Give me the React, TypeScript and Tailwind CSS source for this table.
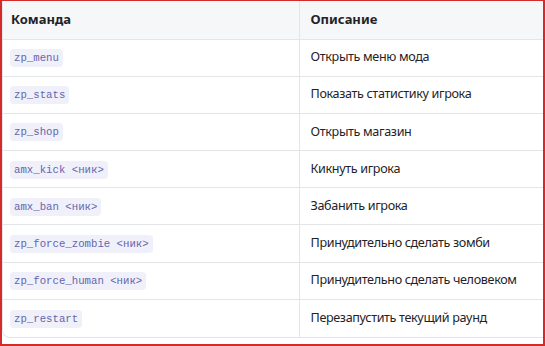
const rows: [string, string][] = [
  ['zp_menu', 'Открыть меню мода'],
  ['zp_stats', 'Показать статистику игрока'],
  ['zp_shop', 'Открыть магазин'],
  ['amx_kick <ник>', 'Кикнуть игрока'],
  ['amx_ban <ник>', 'Забанить игрока'],
  ['zp_force_zombie <ник>', 'Принудительно сделать зомби'],
  ['zp_force_human <ник>', 'Принудительно сделать человеком'],
  ['zp_restart', 'Перезапустить текущий раунд'],
]

export default function App() {
  return (
    <div className="w-[545px] h-[346px] bg-white border-t border-l-2 border-r-2 border-b-2 border-[#d42a2a] font-['Noto_Sans',sans-serif] text-[12.6px] tracking-[-0.35px] text-[#1f2328] overflow-hidden">
      <div className="border-b border-l border-[#e3e5e8] rounded-bl-lg overflow-hidden">
        <table className="w-full border-collapse">
          <thead>
            <tr className="h-[38px] bg-[#f6f7f9] text-left">
              <th className="w-[296px] pl-2 font-bold text-[13px] tracking-normal border-r border-[#e3e5e8] border-b">
                Команда
              </th>
              <th className="pl-[11px] font-bold text-[13px] tracking-normal border-b border-[#e3e5e8]">
                Описание
              </th>
            </tr>
          </thead>
          <tbody>
            {rows.map(([cmd, desc], i) => (
              <tr
                key={cmd}
                className={`h-[37.2px] ${i < rows.length - 1 ? 'border-b border-[#e3e5e8]' : ''}`}
              >
                <td className="pl-[7px] border-r border-[#e3e5e8]">
                  <code className="inline-block h-[18px] leading-[18px] px-1 rounded bg-[#f0f0fa] text-[#6466ad] font-['Liberation_Mono',monospace] text-[10.7px] tracking-normal">
                    {cmd}
                  </code>
                </td>
                <td className="pl-[11px]">{desc}</td>
              </tr>
            ))}
          </tbody>
        </table>
      </div>
    </div>
  )
}
